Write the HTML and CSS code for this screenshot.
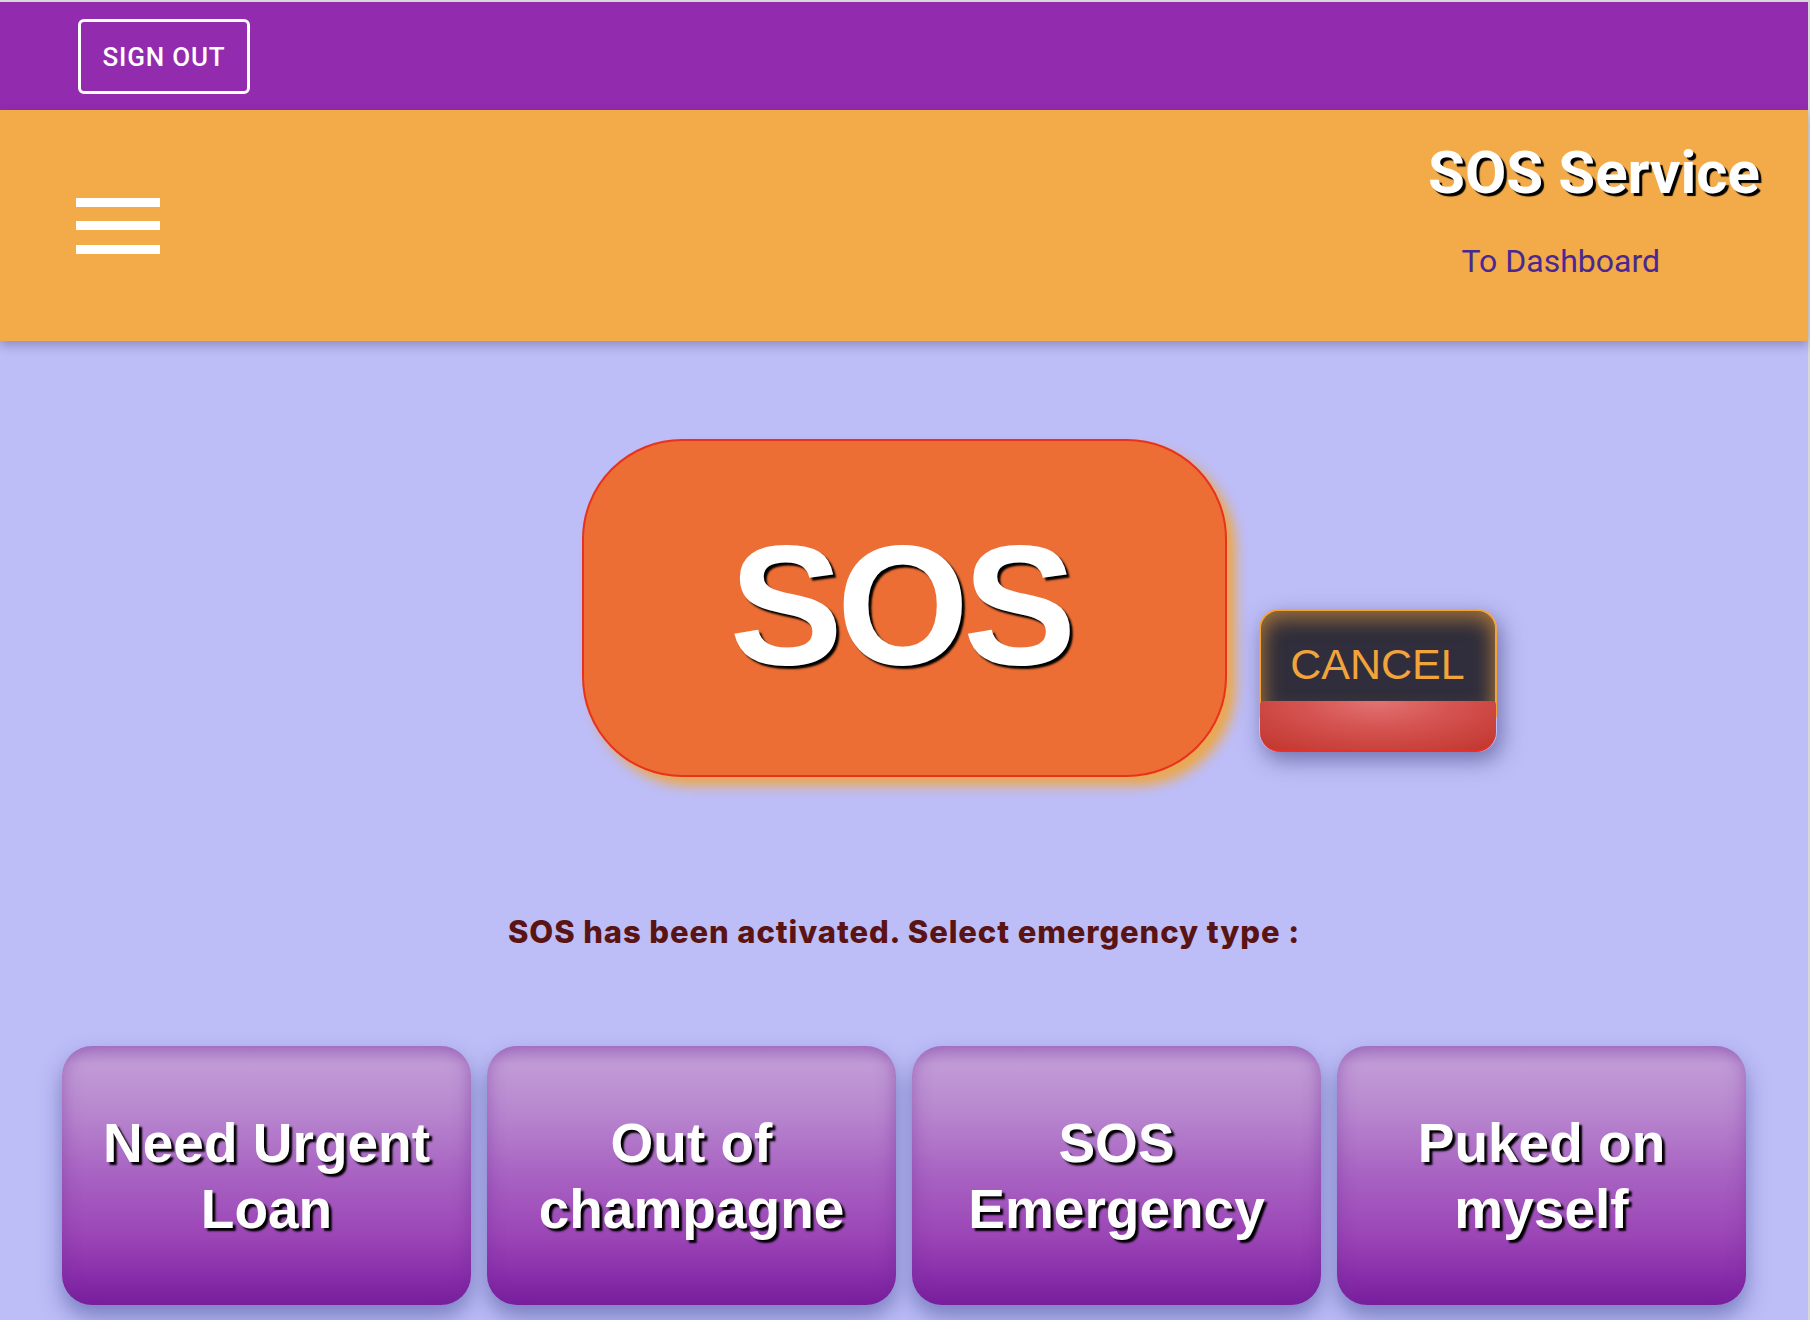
FILE: index.html
```html
<!DOCTYPE html>
<html lang="en">
<head>
<meta charset="utf-8">
<title>SOS Service</title>
<link rel="stylesheet" href="styles.css">
</head>
<body>
<div class="page">
  <div class="topbar">
    <button class="signout">Sign out</button>
  </div>
  <header class="header">
    <button class="menu" aria-label="menu"><span></span><span></span><span></span></button>
    <div class="brand">
      <h1 class="brand-title">SOS Service</h1>
      <a class="brand-link" href="#">To Dashboard</a>
    </div>
  </header>
  <main class="main">
    <div class="sos-row">
      <div class="sos-spacer"></div>
      <button class="sos"><span class="sos-text">SOS</span></button>
      <div class="cancel-col">
        <button class="cancel">
          <span class="cancel-top">CANCEL</span>
          <span class="cancel-bottom"></span>
        </button>
      </div>
    </div>
    <p class="status">SOS has been activated. Select emergency type :</p>
    <div class="types">
      <button class="type">Need Urgent Loan</button>
      <button class="type">Out of champagne</button>
      <button class="type">SOS Emergency</button>
      <button class="type">Puked on myself</button>
    </div>
  </main>
</div>
</body>
</html>
```

FILE: styles.css
```css
* { box-sizing: border-box; }

html, body {
  margin: 0;
  padding: 0;
  height: 100%;
  overflow: hidden;
}

body {
  background: #d8d8d8;
  font-family: Roboto, "Liberation Sans", sans-serif;
}

.page {
  margin-top: 2px;
  width: 1808px;
  height: 1318px;
  background: #bdbdf8;
  display: flex;
  flex-direction: column;
}

.topbar {
  height: 108px;
  background: #922bad;
  display: flex;
  align-items: center;
  padding-left: 78px;
}

.signout {
  width: 172px;
  height: 75px;
  background: transparent;
  border: 3px solid #ffffff;
  border-radius: 6px;
  color: #ffffff;
  font-family: Roboto, sans-serif;
  font-weight: 500;
  font-size: 26px;
  letter-spacing: 0.8px;
  text-transform: uppercase;
  padding: 0;
  margin-top: 1px;
}

.header {
  position: relative;
  z-index: 1;
  height: 231px;
  background: #f2ab48;
  display: flex;
  justify-content: space-between;
  align-items: center;
  padding: 0 48px 0 76px;
  box-shadow: 0 5px 10px rgba(40, 40, 90, 0.3);
}

.menu {
  width: 84px;
  padding: 0;
  border: 0;
  background: transparent;
  display: flex;
  flex-direction: column;
  gap: 14.5px;
}

.menu span {
  display: block;
  height: 9px;
  background: #ffffff;
}

.brand {
  align-self: flex-start;
  padding-top: 28px;
  display: flex;
  flex-direction: column;
  align-items: flex-end;
}

.brand-title {
  margin: 0;
  font-family: Roboto, sans-serif;
  font-weight: 700;
  font-size: 60px;
  line-height: 70px;
  color: #ffffff;
  text-shadow: 3px 3px 1px #000000;
}

.brand-link {
  margin-top: 34px;
  margin-right: 100px;
  font-family: Roboto, sans-serif;
  font-size: 32px;
  line-height: 38px;
  color: #4b2891;
  text-decoration: none;
}

.main {
  flex: 1;
  display: flex;
  flex-direction: column;
}

.sos-row {
  margin-top: 98px;
  display: grid;
  grid-template-columns: 1fr 645px 1fr;
  align-items: start;
}

.sos {
  width: 645px;
  height: 338px;
  border: 2px solid #e8321e;
  border-radius: 100px;
  background: #ec6e34;
  box-shadow: 9px 9px 12px rgba(240, 165, 60, 0.9);
  display: flex;
  align-items: center;
  justify-content: center;
  padding: 0;
}

.sos-text {
  font-family: "Liberation Sans", Arial, sans-serif;
  font-weight: 700;
  font-size: 170px;
  letter-spacing: -6px;
  line-height: 1;
  color: #ffffff;
  text-shadow: 3px 3px 2px #000000;
  margin-top: -6px;
  margin-right: 8px;
}

.cancel-col {
  padding-left: 32px;
  padding-top: 170px;
}

.cancel {
  display: flex;
  flex-direction: column;
  width: 238px;
  padding: 0;
  border: 0;
  background: transparent;
  border-radius: 20px;
  box-shadow: 4px 8px 22px rgba(50, 50, 110, 0.55);
}

.cancel-top {
  display: block;
  height: 108px;
  border: 2px solid #f2a33a;
  border-bottom: 0;
  border-radius: 20px 20px 0 0;
  background: #302e3c;
  box-shadow: inset 0 0 22px rgba(242, 163, 58, 0.55), inset 0 12px 18px rgba(242, 163, 58, 0.25);
  padding-top: 29px;
  font-family: "Liberation Sans", Arial, sans-serif;
  font-size: 43px;
  line-height: 49px;
  color: #f2a33a;
  text-align: center;
}

.cancel-bottom {
  display: block;
  margin: -16px 1px 0;
  height: 51px;
  border-radius: 4px 4px 20px 20px;
  border-bottom: 2px solid #e8302a;
  background: radial-gradient(ellipse 70% 120% at 50% 0%, #e27373 0%, #d55452 45%, #c43a32 100%);
}

.status {
  margin: 137px 0 0;
  text-align: center;
  font-family: Inter, Roboto, sans-serif;
  font-weight: 800;
  font-size: 31px;
  letter-spacing: 0.9px;
  line-height: 35px;
  color: #5a1414;
}

.types {
  margin-top: 97px;
  padding: 0 62px;
  display: flex;
  gap: 16px;
}

.type {
  flex: 1;
  height: 259px;
  border: 0;
  border-radius: 30px;
  padding: 0 20px;
  background: linear-gradient(to bottom, #b185cc 0%, #c19bd6 7%, #b887cf 25%, #a862c2 50%, #9c47b7 72%, #8a2fab 88%, #7a1d9e 100%);
  box-shadow: inset 0 0 18px rgba(110, 40, 150, 0.45), 0 12px 22px rgba(55, 65, 135, 0.5);
  font-family: "Liberation Sans", Arial, sans-serif;
  font-weight: 700;
  font-size: 55px;
  line-height: 66px;
  color: #ffffff;
  text-align: center;
  text-shadow: 3px 3px 2px #000000;
}
```
